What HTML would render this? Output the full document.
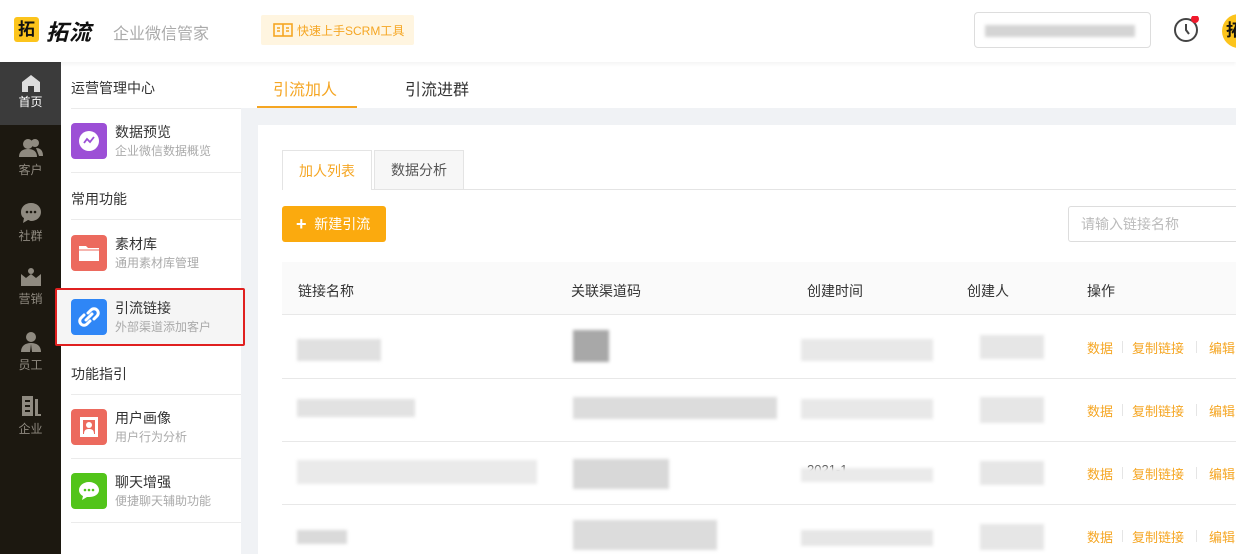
<!DOCTYPE html>
<html><head><meta charset="utf-8">
<style>
*{margin:0;padding:0;box-sizing:border-box}
body{width:1236px;height:554px;overflow:hidden;background:#f0f2f5;font-family:"Liberation Sans","Noto Sans CJK SC",sans-serif;position:relative;font-size:14px;color:#333}
.abs{position:absolute}
.hdr{left:0;top:0;width:1236px;height:62px;background:#fff;box-shadow:0 2px 4px rgba(0,0,0,.05);z-index:2}
.side{left:0;top:62px;width:61px;height:492px;background:#1c1810}
.side .it{position:absolute;left:0;width:61px;text-align:center;color:#8f8a80;font-size:12px}
.panel{left:61px;top:62px;width:180px;height:492px;background:#fff}
.sec{position:absolute;left:10px;font-size:14px;color:#333}
.line{position:absolute;left:10px;width:170px;height:1px;background:#ebebeb}
.mi{position:absolute;left:10px;width:170px;height:63px}
.mi .ic{position:absolute;left:0;top:14px;width:36px;height:36px;border-radius:4px}
.mi .t1{position:absolute;left:44px;top:13px;font-size:14px;color:#333}
.mi .t2{position:absolute;left:44px;top:33px;font-size:12px;color:#aaa}
.blur{position:absolute;background:#d6d6d6;filter:blur(1.5px)}
.op{position:absolute;left:0;width:1236px;height:20px;color:#f5a623;font-size:13px}
.op span{position:absolute;top:0}
.op i{position:absolute;top:3px;width:1px;height:12px;background:#e5e5e5}
.th{position:absolute;top:281px;font-size:14px;color:#333}
</style></head><body>
<div class="abs hdr">
  <div class="abs" style="left:14px;top:17px;width:25px;height:25px;background:#fcc41c;border-radius:3px;font-weight:bold;font-size:17px;line-height:25px;text-align:center;color:#111">拓</div>
  <div class="abs" style="left:46px;top:15px;font-size:22px;font-weight:bold;font-style:italic;color:#111;letter-spacing:1px">拓流</div>
  <div class="abs" style="left:113px;top:20px;font-size:16px;color:#aaa">企业微信管家</div>
  <div class="abs" style="left:261px;top:15px;width:153px;height:30px;background:#fff5e0;border-radius:2px">
    <svg class="abs" style="left:12px;top:8px" width="20" height="14" viewBox="0 0 20 14"><rect x="1" y="1" width="18" height="12" fill="none" stroke="#f5a623" stroke-width="1.6"/><line x1="10" y1="1" x2="10" y2="13" stroke="#f5a623" stroke-width="1.6"/><path d="M4 5h3M4 8h3M13 5h3M13 8h3" stroke="#f5a623" stroke-width="1.4"/></svg>
    <div class="abs" style="left:36px;top:7px;font-size:12px;color:#f5a623">快速上手SCRM工具</div>
  </div>
  <div class="abs" style="left:974px;top:12px;width:177px;height:36px;border:1px solid #ddd;border-radius:4px">
    <div class="blur" style="left:10px;top:12px;width:150px;height:12px;background:#d4d4d4"></div>
  </div>
  <svg class="abs" style="left:1173px;top:16px" width="30" height="30" viewBox="0 0 30 30"><circle cx="13" cy="14" r="11" fill="none" stroke="#444" stroke-width="2"/><path d="M13 8v6l3 4" fill="none" stroke="#444" stroke-width="2"/><circle cx="22" cy="3" r="4" fill="#f0192c"/></svg>
  <div class="abs" style="left:1222px;top:14px;width:34px;height:34px;border-radius:50%;background:#fcc41c;font-weight:bold;font-size:17px;line-height:34px;padding-left:4px;color:#111">拓</div>
</div>

<div class="abs side">
  <div class="abs" style="left:0;top:0;width:61px;height:63px;background:#3b3b3b"></div>
  <div class="it" style="top:12px"><svg width="20" height="18" viewBox="0 0 20 18"><path d="M10 1L1 8v10h6v-6h6v6h6V8z" fill="#ddd"/></svg><div style="color:#fff;margin-top:-2px">首页</div></div>
  <div class="it" style="top:76px"><svg width="24" height="20" viewBox="0 0 24 20"><circle cx="9" cy="6" r="5" fill="#8f8a80"/><path d="M0 19c0-6 4-8 9-8s9 2 9 8z" fill="#8f8a80"/><circle cx="16" cy="5" r="4" fill="#8f8a80"/><path d="M17 10c4 0 7 2 7 8h-4z" fill="#8f8a80"/></svg><div>客户</div></div>
  <div class="it" style="top:140px"><svg width="22" height="22" viewBox="0 0 22 22"><path d="M11 1C5 1 1 5 1 10c0 3 1 5 3 6l-1 5 5-3c1 0 2 1 3 1 6 0 10-4 10-9S17 1 11 1z" fill="#8f8a80"/><circle cx="7" cy="10" r="1.3" fill="#1c1810"/><circle cx="11" cy="10" r="1.3" fill="#1c1810"/><circle cx="15" cy="10" r="1.3" fill="#1c1810"/></svg><div>社群</div></div>
  <div class="it" style="top:205px"><svg width="22" height="20" viewBox="0 0 22 20"><circle cx="11" cy="4" r="3" fill="#8f8a80"/><path d="M1 7l5 4 5-4 5 4 5-4v12H1z" fill="#8f8a80"/></svg><div>营销</div></div>
  <div class="it" style="top:269px"><svg width="22" height="22" viewBox="0 0 22 22"><circle cx="11" cy="6" r="5" fill="#8f8a80"/><path d="M1 21c0-6 4-9 10-9s10 3 10 9z" fill="#8f8a80"/><path d="M11 13l-1 8h2z" fill="#1c1810"/></svg><div>员工</div></div>
  <div class="it" style="top:333px"><svg width="22" height="22" viewBox="0 0 22 22"><rect x="2" y="1" width="11" height="20" fill="#8f8a80"/><path d="M5 6h5M5 11h5M5 16h5" stroke="#1c1810" stroke-width="2"/><rect x="15" y="4" width="3" height="17" fill="#8f8a80"/><rect x="15" y="19" width="6" height="2" fill="#8f8a80"/></svg><div>企业</div></div>
</div>

<div class="abs panel">
  <div class="sec" style="top:16px">运营管理中心</div>
  <div class="line" style="top:46px"></div>
  <div class="mi" style="top:47px"><div class="ic" style="background:#9c4fd6"><svg width="36" height="36"><circle cx="18" cy="18" r="10" fill="#fff"/><path d="M13 20l3-4 3 3 4-5" fill="none" stroke="#9c4fd6" stroke-width="1.8"/></svg></div><div class="t1">数据预览</div><div class="t2">企业微信数据概览</div></div>
  <div class="line" style="top:110px"></div>
  <div class="sec" style="top:127px">常用功能</div>
  <div class="line" style="top:157px"></div>
  <div class="mi" style="top:159px"><div class="ic" style="background:#ec6a5e"><svg width="36" height="36"><path d="M8 11h7l2 2h11v13H8z" fill="#fff"/><path d="M8 15h20" stroke="#ec6a5e" stroke-width="1"/></svg></div><div class="t1">素材库</div><div class="t2">通用素材库管理</div></div>
  <div class="abs" style="left:-6px;top:226px;width:190px;height:58px;background:#f5f5f5;border:2px solid #e02020;border-radius:2px"></div>
  <div class="mi" style="top:223px"><div class="ic" style="background:#2f86f6"><svg width="36" height="36"><g fill="none" stroke="#fff" stroke-width="3" stroke-linecap="round"><path d="M17 14l3-3a4 4 0 016 6l-3 3"/><path d="M19 22l-3 3a4 4 0 01-6-6l3-3"/><path d="M15 21l6-6"/></g></svg></div><div class="t1">引流链接</div><div class="t2">外部渠道添加客户</div></div>
  <div class="sec" style="top:302px">功能指引</div>
  <div class="line" style="top:332px"></div>
  <div class="mi" style="top:333px"><div class="ic" style="background:#ec6a5e"><svg width="36" height="36"><rect x="9" y="8" width="18" height="20" fill="#fff"/><rect x="12" y="11" width="12" height="14" fill="#ec6a5e"/><circle cx="18" cy="16" r="3" fill="#fff"/><path d="M13 25c0-4 2-5 5-5s5 1 5 5z" fill="#fff"/></svg></div><div class="t1">用户画像</div><div class="t2">用户行为分析</div></div>
  <div class="line" style="top:396px"></div>
  <div class="mi" style="top:397px"><div class="ic" style="background:#52c41a"><svg width="36" height="36"><path d="M18 9c-6 0-10 4-10 8 0 3 2 5 4 6l-1 4 5-3h2c6 0 10-3 10-7s-4-8-10-8z" fill="#fff"/><circle cx="14" cy="17" r="1.3" fill="#52c41a"/><circle cx="18" cy="17" r="1.3" fill="#52c41a"/><circle cx="22" cy="17" r="1.3" fill="#52c41a"/></svg></div><div class="t1">聊天增强</div><div class="t2">便捷聊天辅助功能</div></div>
  <div class="line" style="top:460px"></div>
</div>

<div class="abs" style="left:241px;top:62px;width:995px;height:46px;background:#fff">
  <div class="abs" style="left:32px;top:14px;font-size:16px;color:#f5a623">引流加人</div>
  <div class="abs" style="left:16px;top:44px;width:100px;height:2px;background:#f5a623"></div>
  <div class="abs" style="left:164px;top:14px;font-size:16px;color:#333">引流进群</div>
</div>

<div class="abs" style="left:258px;top:125px;width:978px;height:429px;background:#fff"></div>
<div class="abs" style="left:282px;top:189px;width:954px;height:1px;background:#e4e4e4"></div>
<div class="abs" style="left:282px;top:150px;width:90px;height:40px;background:#fff;border:1px solid #e4e4e4;border-bottom:none;color:#f5a623;font-size:14px;line-height:40px;text-align:center">加人列表</div>
<div class="abs" style="left:374px;top:150px;width:90px;height:39px;background:#f7f7f7;border:1px solid #e4e4e4;border-bottom:none;color:#555;font-size:14px;line-height:39px;text-align:center">数据分析</div>
<div class="abs" style="left:282px;top:206px;width:104px;height:36px;background:#fbaa0e;border-radius:3px;color:#fff;font-size:14px;line-height:36px;padding-left:14px"><span style="font-size:18px;font-weight:bold;vertical-align:-1px">+</span>&nbsp; 新建引流</div>
<div class="abs" style="left:1068px;top:206px;width:180px;height:36px;border:1px solid #ddd;border-radius:3px;color:#bbb;font-size:14px;line-height:34px;padding-left:12px">请输入链接名称</div>

<div class="abs" style="left:282px;top:262px;width:954px;height:53px;background:#fafafa;border-bottom:1px solid #e8e8e8"></div>
<div class="th" style="left:298px">链接名称</div>
<div class="th" style="left:571px">关联渠道码</div>
<div class="th" style="left:807px">创建时间</div>
<div class="th" style="left:967px">创建人</div>
<div class="th" style="left:1087px">操作</div>

<div class="abs" style="left:282px;top:378px;width:954px;height:1px;background:#e8e8e8"></div>
<div class="abs" style="left:282px;top:441px;width:954px;height:1px;background:#e8e8e8"></div>
<div class="abs" style="left:282px;top:504px;width:954px;height:1px;background:#e8e8e8"></div>

<div class="blur" style="left:297px;top:339px;width:84px;height:22px;background:#e0e0e0"></div>
<div class="blur" style="left:573px;top:330px;width:36px;height:32px;background:#a8a8a8"></div>
<div class="blur" style="left:801px;top:339px;width:132px;height:22px;background:#e8e8e8"></div>
<div class="blur" style="left:980px;top:335px;width:64px;height:24px;background:#e6e6e6"></div>

<div class="blur" style="left:297px;top:399px;width:118px;height:18px;background:#e2e2e2"></div>
<div class="blur" style="left:573px;top:397px;width:204px;height:22px;background:#dcdcdc"></div>
<div class="blur" style="left:801px;top:399px;width:132px;height:20px;background:#e8e8e8"></div>
<div class="blur" style="left:980px;top:397px;width:64px;height:26px;background:#e6e6e6"></div>

<div class="blur" style="left:297px;top:460px;width:240px;height:24px;background:#eaeaea"></div>
<div class="blur" style="left:573px;top:459px;width:96px;height:30px;background:#d8d8d8"></div>
<div class="abs" style="left:807px;top:462px;font-size:13px;color:#555">2021-1</div>
<div class="blur" style="left:801px;top:468px;width:132px;height:14px;background:#eaeaea"></div>
<div class="blur" style="left:980px;top:461px;width:64px;height:24px;background:#e6e6e6"></div>

<div class="blur" style="left:297px;top:530px;width:50px;height:14px;background:#dadada"></div>
<div class="blur" style="left:573px;top:520px;width:144px;height:30px;background:#dcdcdc"></div>
<div class="blur" style="left:801px;top:530px;width:132px;height:16px;background:#e6e6e6"></div>
<div class="blur" style="left:980px;top:524px;width:64px;height:26px;background:#e6e6e6"></div>

<div class="op" style="top:338px"><span style="left:1087px">数据</span><i style="left:1122px"></i><span style="left:1132px">复制链接</span><i style="left:1196px"></i><span style="left:1209px">编辑</span></div>
<div class="op" style="top:401px"><span style="left:1087px">数据</span><i style="left:1122px"></i><span style="left:1132px">复制链接</span><i style="left:1196px"></i><span style="left:1209px">编辑</span></div>
<div class="op" style="top:464px"><span style="left:1087px">数据</span><i style="left:1122px"></i><span style="left:1132px">复制链接</span><i style="left:1196px"></i><span style="left:1209px">编辑</span></div>
<div class="op" style="top:527px"><span style="left:1087px">数据</span><i style="left:1122px"></i><span style="left:1132px">复制链接</span><i style="left:1196px"></i><span style="left:1209px">编辑</span></div>
</body></html>
